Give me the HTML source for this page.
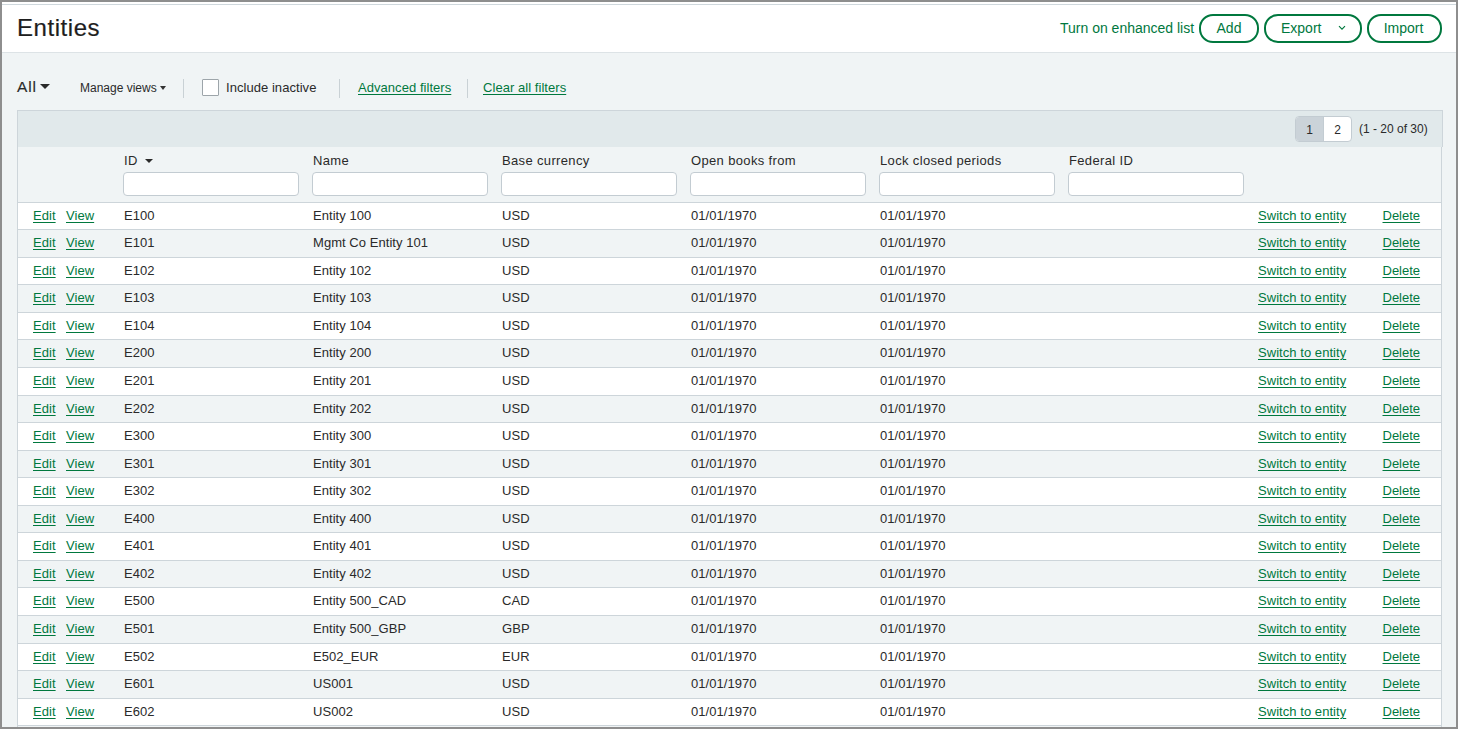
<!DOCTYPE html>
<html><head><meta charset="utf-8">
<style>
*{box-sizing:border-box;margin:0;padding:0}
html,body{width:1458px;height:729px;overflow:hidden;background:#8e8e8e}
body{position:relative;font-family:"Liberation Sans",sans-serif;color:#2a2a2a}
.pg{position:absolute;left:2px;top:2px;width:1454px;height:725px;background:#f0f4f5;overflow:hidden}
.a{position:absolute;white-space:nowrap}
.hdr{position:absolute;left:0;top:0;width:1454px;height:51px;background:#fff;border-bottom:1px solid #dde3e6}
.topl{position:absolute;left:0;top:2px;width:1454px;height:1px;background:#cfd8dd}
.title{font-size:24px;line-height:28px;letter-spacing:0.55px;-webkit-text-stroke:0.2px #1e1e1e;color:#1e1e1e}
.lnk{color:#00783e;font-size:14px;line-height:16px}
.btn{position:absolute;top:12px;height:29px;border:2px solid #00783e;border-radius:14px;color:#00783e;font-size:14px;line-height:24px;text-align:center;background:#fff}
.f13{font-size:13px;line-height:15px;letter-spacing:0.05px}
.hl{letter-spacing:0.35px}
.f12{font-size:12px;line-height:14px}
.u{color:#00783e;text-decoration:underline;text-underline-offset:2px}
.sep{position:absolute;width:1px;background:#c9d1d5;height:19px!important}
.tri{position:absolute;width:0;height:0;border-left:5px solid transparent;border-right:5px solid transparent;border-top:5px solid #2a2a2a}
.tbl{position:absolute;left:15px;top:108px;width:1425px;height:640px;border-left:1px solid #cdd5da;border-right:1px solid #cdd5da}
.pbar{position:absolute;left:15px;top:108px;width:1426px;height:37px;background:#e1e9eb;border:1px solid #cdd5da;border-bottom:none}
.inp{position:absolute;top:170px;width:176px;height:24px;background:#fff;border:1px solid #c3ccd2;border-radius:4px}
.row{position:absolute;left:16px;width:1423px;border-top:1px solid #cdd5da}
</style></head><body><div class="pg">
<div class="hdr"></div><div class="topl"></div>
<div class="a title" style="left:15px;top:12px">Entities</div>
<div class="a lnk" style="left:1058px;top:18px">Turn on enhanced list</div>
<div class="btn" style="left:1197px;width:60px">Add</div>
<div class="btn" style="left:1262px;width:98px;text-align:left;padding-left:15px">Export<svg style="position:absolute;left:72px;top:9px" width="8" height="6" viewBox="0 0 8 6"><path d="M1 1.2 L4 4.2 L7 1.2" fill="none" stroke="#00783e" stroke-width="1.15"/></svg></div>
<div class="btn" style="left:1365px;width:75px;padding-right:2px">Import</div>

<div class="a" style="left:15px;top:76px;font-size:15.5px;line-height:18px;letter-spacing:0.8px;-webkit-text-stroke:0.15px #2a2a2a">All</div>
<div class="tri" style="left:38px;top:82px;border-left-width:5px;border-right-width:5px;border-top-width:5px"></div>
<div class="a f12" style="left:78px;top:79px">Manage views</div>
<div class="tri" style="left:158px;top:84px;border-left-width:3.7px;border-right-width:3.7px;border-top-width:4px;border-top-color:#333"></div>
<div class="sep" style="left:181px;top:77px;height:18px"></div>
<div class="a" style="left:200px;top:77px;width:17px;height:17px;background:#fff;border:1px solid #9da5aa;border-radius:1px"></div>
<div class="a f13" style="left:224px;top:78px">Include inactive</div>
<div class="sep" style="left:337px;top:77px;height:18px"></div>
<div class="a f13 u" style="left:356px;top:78px">Advanced filters</div>
<div class="sep" style="left:465px;top:77px;height:18px"></div>
<div class="a f13 u" style="left:481px;top:78px">Clear all filters</div>

<div class="tbl"></div>
<div class="pbar"></div>
<div class="a" style="left:1293px;top:114px;width:57px;height:26px;border:1px solid #c3ccd2;border-radius:4px;overflow:hidden;background:#fff">
 <div class="a f12" style="left:0;top:0;width:28px;height:24px;background:#cbd3d9;border-right:1px solid #c3ccd2;text-align:center;line-height:27px">1</div>
 <div class="a f12" style="left:28px;top:0;width:27px;height:24px;text-align:center;line-height:27px">2</div>
</div>
<div class="a f12" style="left:1357px;top:120px">(1 - 20 of 30)</div>

<div class="a f13 hl" style="left:122px;top:151px">ID</div>
<div class="inp" style="left:121px"></div>
<div class="a f13 hl" style="left:311px;top:151px">Name</div>
<div class="inp" style="left:310px"></div>
<div class="a f13 hl" style="left:500px;top:151px">Base currency</div>
<div class="inp" style="left:499px"></div>
<div class="a f13 hl" style="left:689px;top:151px">Open books from</div>
<div class="inp" style="left:688px"></div>
<div class="a f13 hl" style="left:878px;top:151px">Lock closed periods</div>
<div class="inp" style="left:877px"></div>
<div class="a f13 hl" style="left:1067px;top:151px">Federal ID</div>
<div class="inp" style="left:1066px"></div>
<div class="tri" style="left:143px;top:157px;border-left-width:4.5px;border-right-width:4.5px;border-top-width:4.5px"></div>
<div class="row" style="top:200px;height:28px;background:#fff"><span class="a f13 u" style="left:15px;top:5px">Edit</span><span class="a f13 u" style="left:48px;top:5px">View</span><span class="a f13" style="left:106px;top:5px">E100</span><span class="a f13" style="left:295px;top:5px">Entity 100</span><span class="a f13" style="left:484px;top:5px">USD</span><span class="a f13" style="left:673px;top:5px">01/01/1970</span><span class="a f13" style="left:862px;top:5px">01/01/1970</span><span class="a f13 u" style="left:1240px;top:5px">Switch to entity</span><span class="a f13 u" style="left:1364.5px;top:5px;letter-spacing:0">Delete</span></div>
<div class="row" style="top:227px;height:29px;background:#f0f4f5"><span class="a f13 u" style="left:15px;top:5px">Edit</span><span class="a f13 u" style="left:48px;top:5px">View</span><span class="a f13" style="left:106px;top:5px">E101</span><span class="a f13" style="left:295px;top:5px">Mgmt Co Entity 101</span><span class="a f13" style="left:484px;top:5px">USD</span><span class="a f13" style="left:673px;top:5px">01/01/1970</span><span class="a f13" style="left:862px;top:5px">01/01/1970</span><span class="a f13 u" style="left:1240px;top:5px">Switch to entity</span><span class="a f13 u" style="left:1364.5px;top:5px;letter-spacing:0">Delete</span></div>
<div class="row" style="top:255px;height:28px;background:#fff"><span class="a f13 u" style="left:15px;top:5px">Edit</span><span class="a f13 u" style="left:48px;top:5px">View</span><span class="a f13" style="left:106px;top:5px">E102</span><span class="a f13" style="left:295px;top:5px">Entity 102</span><span class="a f13" style="left:484px;top:5px">USD</span><span class="a f13" style="left:673px;top:5px">01/01/1970</span><span class="a f13" style="left:862px;top:5px">01/01/1970</span><span class="a f13 u" style="left:1240px;top:5px">Switch to entity</span><span class="a f13 u" style="left:1364.5px;top:5px;letter-spacing:0">Delete</span></div>
<div class="row" style="top:282px;height:29px;background:#f0f4f5"><span class="a f13 u" style="left:15px;top:5px">Edit</span><span class="a f13 u" style="left:48px;top:5px">View</span><span class="a f13" style="left:106px;top:5px">E103</span><span class="a f13" style="left:295px;top:5px">Entity 103</span><span class="a f13" style="left:484px;top:5px">USD</span><span class="a f13" style="left:673px;top:5px">01/01/1970</span><span class="a f13" style="left:862px;top:5px">01/01/1970</span><span class="a f13 u" style="left:1240px;top:5px">Switch to entity</span><span class="a f13 u" style="left:1364.5px;top:5px;letter-spacing:0">Delete</span></div>
<div class="row" style="top:310px;height:28px;background:#fff"><span class="a f13 u" style="left:15px;top:5px">Edit</span><span class="a f13 u" style="left:48px;top:5px">View</span><span class="a f13" style="left:106px;top:5px">E104</span><span class="a f13" style="left:295px;top:5px">Entity 104</span><span class="a f13" style="left:484px;top:5px">USD</span><span class="a f13" style="left:673px;top:5px">01/01/1970</span><span class="a f13" style="left:862px;top:5px">01/01/1970</span><span class="a f13 u" style="left:1240px;top:5px">Switch to entity</span><span class="a f13 u" style="left:1364.5px;top:5px;letter-spacing:0">Delete</span></div>
<div class="row" style="top:337px;height:29px;background:#f0f4f5"><span class="a f13 u" style="left:15px;top:5px">Edit</span><span class="a f13 u" style="left:48px;top:5px">View</span><span class="a f13" style="left:106px;top:5px">E200</span><span class="a f13" style="left:295px;top:5px">Entity 200</span><span class="a f13" style="left:484px;top:5px">USD</span><span class="a f13" style="left:673px;top:5px">01/01/1970</span><span class="a f13" style="left:862px;top:5px">01/01/1970</span><span class="a f13 u" style="left:1240px;top:5px">Switch to entity</span><span class="a f13 u" style="left:1364.5px;top:5px;letter-spacing:0">Delete</span></div>
<div class="row" style="top:365px;height:29px;background:#fff"><span class="a f13 u" style="left:15px;top:5px">Edit</span><span class="a f13 u" style="left:48px;top:5px">View</span><span class="a f13" style="left:106px;top:5px">E201</span><span class="a f13" style="left:295px;top:5px">Entity 201</span><span class="a f13" style="left:484px;top:5px">USD</span><span class="a f13" style="left:673px;top:5px">01/01/1970</span><span class="a f13" style="left:862px;top:5px">01/01/1970</span><span class="a f13 u" style="left:1240px;top:5px">Switch to entity</span><span class="a f13 u" style="left:1364.5px;top:5px;letter-spacing:0">Delete</span></div>
<div class="row" style="top:393px;height:28px;background:#f0f4f5"><span class="a f13 u" style="left:15px;top:5px">Edit</span><span class="a f13 u" style="left:48px;top:5px">View</span><span class="a f13" style="left:106px;top:5px">E202</span><span class="a f13" style="left:295px;top:5px">Entity 202</span><span class="a f13" style="left:484px;top:5px">USD</span><span class="a f13" style="left:673px;top:5px">01/01/1970</span><span class="a f13" style="left:862px;top:5px">01/01/1970</span><span class="a f13 u" style="left:1240px;top:5px">Switch to entity</span><span class="a f13 u" style="left:1364.5px;top:5px;letter-spacing:0">Delete</span></div>
<div class="row" style="top:420px;height:29px;background:#fff"><span class="a f13 u" style="left:15px;top:5px">Edit</span><span class="a f13 u" style="left:48px;top:5px">View</span><span class="a f13" style="left:106px;top:5px">E300</span><span class="a f13" style="left:295px;top:5px">Entity 300</span><span class="a f13" style="left:484px;top:5px">USD</span><span class="a f13" style="left:673px;top:5px">01/01/1970</span><span class="a f13" style="left:862px;top:5px">01/01/1970</span><span class="a f13 u" style="left:1240px;top:5px">Switch to entity</span><span class="a f13 u" style="left:1364.5px;top:5px;letter-spacing:0">Delete</span></div>
<div class="row" style="top:448px;height:28px;background:#f0f4f5"><span class="a f13 u" style="left:15px;top:5px">Edit</span><span class="a f13 u" style="left:48px;top:5px">View</span><span class="a f13" style="left:106px;top:5px">E301</span><span class="a f13" style="left:295px;top:5px">Entity 301</span><span class="a f13" style="left:484px;top:5px">USD</span><span class="a f13" style="left:673px;top:5px">01/01/1970</span><span class="a f13" style="left:862px;top:5px">01/01/1970</span><span class="a f13 u" style="left:1240px;top:5px">Switch to entity</span><span class="a f13 u" style="left:1364.5px;top:5px;letter-spacing:0">Delete</span></div>
<div class="row" style="top:475px;height:29px;background:#fff"><span class="a f13 u" style="left:15px;top:5px">Edit</span><span class="a f13 u" style="left:48px;top:5px">View</span><span class="a f13" style="left:106px;top:5px">E302</span><span class="a f13" style="left:295px;top:5px">Entity 302</span><span class="a f13" style="left:484px;top:5px">USD</span><span class="a f13" style="left:673px;top:5px">01/01/1970</span><span class="a f13" style="left:862px;top:5px">01/01/1970</span><span class="a f13 u" style="left:1240px;top:5px">Switch to entity</span><span class="a f13 u" style="left:1364.5px;top:5px;letter-spacing:0">Delete</span></div>
<div class="row" style="top:503px;height:28px;background:#f0f4f5"><span class="a f13 u" style="left:15px;top:5px">Edit</span><span class="a f13 u" style="left:48px;top:5px">View</span><span class="a f13" style="left:106px;top:5px">E400</span><span class="a f13" style="left:295px;top:5px">Entity 400</span><span class="a f13" style="left:484px;top:5px">USD</span><span class="a f13" style="left:673px;top:5px">01/01/1970</span><span class="a f13" style="left:862px;top:5px">01/01/1970</span><span class="a f13 u" style="left:1240px;top:5px">Switch to entity</span><span class="a f13 u" style="left:1364.5px;top:5px;letter-spacing:0">Delete</span></div>
<div class="row" style="top:530px;height:29px;background:#fff"><span class="a f13 u" style="left:15px;top:5px">Edit</span><span class="a f13 u" style="left:48px;top:5px">View</span><span class="a f13" style="left:106px;top:5px">E401</span><span class="a f13" style="left:295px;top:5px">Entity 401</span><span class="a f13" style="left:484px;top:5px">USD</span><span class="a f13" style="left:673px;top:5px">01/01/1970</span><span class="a f13" style="left:862px;top:5px">01/01/1970</span><span class="a f13 u" style="left:1240px;top:5px">Switch to entity</span><span class="a f13 u" style="left:1364.5px;top:5px;letter-spacing:0">Delete</span></div>
<div class="row" style="top:558px;height:28px;background:#f0f4f5"><span class="a f13 u" style="left:15px;top:5px">Edit</span><span class="a f13 u" style="left:48px;top:5px">View</span><span class="a f13" style="left:106px;top:5px">E402</span><span class="a f13" style="left:295px;top:5px">Entity 402</span><span class="a f13" style="left:484px;top:5px">USD</span><span class="a f13" style="left:673px;top:5px">01/01/1970</span><span class="a f13" style="left:862px;top:5px">01/01/1970</span><span class="a f13 u" style="left:1240px;top:5px">Switch to entity</span><span class="a f13 u" style="left:1364.5px;top:5px;letter-spacing:0">Delete</span></div>
<div class="row" style="top:585px;height:29px;background:#fff"><span class="a f13 u" style="left:15px;top:5px">Edit</span><span class="a f13 u" style="left:48px;top:5px">View</span><span class="a f13" style="left:106px;top:5px">E500</span><span class="a f13" style="left:295px;top:5px">Entity 500_CAD</span><span class="a f13" style="left:484px;top:5px">CAD</span><span class="a f13" style="left:673px;top:5px">01/01/1970</span><span class="a f13" style="left:862px;top:5px">01/01/1970</span><span class="a f13 u" style="left:1240px;top:5px">Switch to entity</span><span class="a f13 u" style="left:1364.5px;top:5px;letter-spacing:0">Delete</span></div>
<div class="row" style="top:613px;height:29px;background:#f0f4f5"><span class="a f13 u" style="left:15px;top:5px">Edit</span><span class="a f13 u" style="left:48px;top:5px">View</span><span class="a f13" style="left:106px;top:5px">E501</span><span class="a f13" style="left:295px;top:5px">Entity 500_GBP</span><span class="a f13" style="left:484px;top:5px">GBP</span><span class="a f13" style="left:673px;top:5px">01/01/1970</span><span class="a f13" style="left:862px;top:5px">01/01/1970</span><span class="a f13 u" style="left:1240px;top:5px">Switch to entity</span><span class="a f13 u" style="left:1364.5px;top:5px;letter-spacing:0">Delete</span></div>
<div class="row" style="top:641px;height:28px;background:#fff"><span class="a f13 u" style="left:15px;top:5px">Edit</span><span class="a f13 u" style="left:48px;top:5px">View</span><span class="a f13" style="left:106px;top:5px">E502</span><span class="a f13" style="left:295px;top:5px">E502_EUR</span><span class="a f13" style="left:484px;top:5px">EUR</span><span class="a f13" style="left:673px;top:5px">01/01/1970</span><span class="a f13" style="left:862px;top:5px">01/01/1970</span><span class="a f13 u" style="left:1240px;top:5px">Switch to entity</span><span class="a f13 u" style="left:1364.5px;top:5px;letter-spacing:0">Delete</span></div>
<div class="row" style="top:668px;height:29px;background:#f0f4f5"><span class="a f13 u" style="left:15px;top:5px">Edit</span><span class="a f13 u" style="left:48px;top:5px">View</span><span class="a f13" style="left:106px;top:5px">E601</span><span class="a f13" style="left:295px;top:5px">US001</span><span class="a f13" style="left:484px;top:5px">USD</span><span class="a f13" style="left:673px;top:5px">01/01/1970</span><span class="a f13" style="left:862px;top:5px">01/01/1970</span><span class="a f13 u" style="left:1240px;top:5px">Switch to entity</span><span class="a f13 u" style="left:1364.5px;top:5px;letter-spacing:0">Delete</span></div>
<div class="row" style="top:696px;height:28px;background:#fff"><span class="a f13 u" style="left:15px;top:5px">Edit</span><span class="a f13 u" style="left:48px;top:5px">View</span><span class="a f13" style="left:106px;top:5px">E602</span><span class="a f13" style="left:295px;top:5px">US002</span><span class="a f13" style="left:484px;top:5px">USD</span><span class="a f13" style="left:673px;top:5px">01/01/1970</span><span class="a f13" style="left:862px;top:5px">01/01/1970</span><span class="a f13 u" style="left:1240px;top:5px">Switch to entity</span><span class="a f13 u" style="left:1364.5px;top:5px;letter-spacing:0">Delete</span></div>
<div class="row" style="top:723px;height:29px;background:#f0f4f5"><span class="a f13 u" style="left:15px;top:5px">Edit</span><span class="a f13 u" style="left:48px;top:5px">View</span><span class="a f13" style="left:106px;top:5px"></span><span class="a f13" style="left:295px;top:5px"></span><span class="a f13" style="left:484px;top:5px"></span><span class="a f13" style="left:673px;top:5px">01/01/1970</span><span class="a f13" style="left:862px;top:5px">01/01/1970</span><span class="a f13 u" style="left:1240px;top:5px">Switch to entity</span><span class="a f13 u" style="left:1364.5px;top:5px;letter-spacing:0">Delete</span></div>
</div></body></html>
